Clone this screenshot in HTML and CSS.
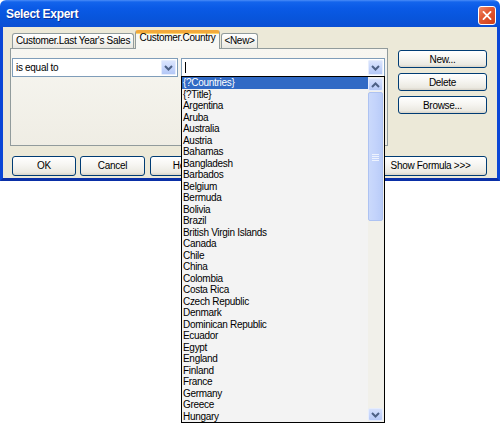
FILE: index.html
```html
<!DOCTYPE html>
<html lang="en">
<head>
    <meta charset="UTF-8">
    <title>Select Expert</title>
    <link rel="stylesheet" href="styles.css">
</head>
<body>
    <div class="window">
        <div class="titlebar">
            <span class="title">Select Expert</span>
            <button class="close-btn" aria-label="Close">
                <svg width="18" height="19" viewBox="0 0 18 19"><path d="M5 5.5 L13 13.5 M13 5.5 L5 13.5" stroke="#fff" stroke-width="2" stroke-linecap="round"/></svg>
            </button>
        </div>
        <div class="frame">
            <div class="main">
                <div class="tabs-area">
                    <ul class="tab-strip">
                        <li class="tab tab-sales">Customer.Last Year's Sales</li>
                        <li class="tab tab-country active">Customer.Country</li>
                        <li class="tab tab-new">&lt;New&gt;</li>
                    </ul>
                    <div class="panel">
                        <div class="combo-row">
                            <div class="combo combo-op">
                                <span class="combo-text">is equal to</span>
                                <span class="combo-arrow">
                                    <svg width="9" height="6" viewBox="0 0 9 6"><path d="M1 1 L4.5 4.5 L8 1" fill="none" stroke="#4d6185" stroke-width="2"/></svg>
                                </span>
                            </div>
                            <div class="combo combo-value">
                                <span class="combo-text"><span class="caret"></span></span>
                                <span class="combo-arrow">
                                    <svg width="9" height="6" viewBox="0 0 9 6"><path d="M1 1 L4.5 4.5 L8 1" fill="none" stroke="#4d6185" stroke-width="2"/></svg>
                                </span>
                                <div class="dropdown">
                                    <ul class="options">
                                        <li class="option selected">{?Countries}</li>
                                        <li class="option">{?Title}</li>
                                        <li class="option">Argentina</li>
                                        <li class="option">Aruba</li>
                                        <li class="option">Australia</li>
                                        <li class="option">Austria</li>
                                        <li class="option">Bahamas</li>
                                        <li class="option">Bangladesh</li>
                                        <li class="option">Barbados</li>
                                        <li class="option">Belgium</li>
                                        <li class="option">Bermuda</li>
                                        <li class="option">Bolivia</li>
                                        <li class="option">Brazil</li>
                                        <li class="option">British Virgin Islands</li>
                                        <li class="option">Canada</li>
                                        <li class="option">Chile</li>
                                        <li class="option">China</li>
                                        <li class="option">Colombia</li>
                                        <li class="option">Costa Rica</li>
                                        <li class="option">Czech Republic</li>
                                        <li class="option">Denmark</li>
                                        <li class="option">Dominican Republic</li>
                                        <li class="option">Ecuador</li>
                                        <li class="option">Egypt</li>
                                        <li class="option">England</li>
                                        <li class="option">Finland</li>
                                        <li class="option">France</li>
                                        <li class="option">Germany</li>
                                        <li class="option">Greece</li>
                                        <li class="option">Hungary</li>
                                    </ul>
                                    <div class="scrollbar">
                                        <span class="scroll-btn">
                                            <svg width="9" height="6" viewBox="0 0 9 6"><path d="M1 5 L4.5 1.5 L8 5" fill="none" stroke="#4d6185" stroke-width="2"/></svg>
                                        </span>
                                        <span class="scroll-thumb">
                                            <svg width="7" height="8" viewBox="0 0 7 8"><path d="M0 1.5 H7 M0 3.5 H7 M0 5.5 H7 M0 7.5 H7" stroke="#eef3fe" stroke-width="1"/></svg>
                                        </span>
                                        <span class="scroll-track"></span>
                                        <span class="scroll-btn">
                                            <svg width="9" height="6" viewBox="0 0 9 6"><path d="M1 1 L4.5 4.5 L8 1" fill="none" stroke="#4d6185" stroke-width="2"/></svg>
                                        </span>
                                    </div>
                                </div>
                            </div>
                        </div>
                    </div>
                </div>
                <div class="side-buttons">
                    <button class="btn">New...</button>
                    <button class="btn">Delete</button>
                    <button class="btn">Browse...</button>
                </div>
            </div>
            <div class="footer">
                <button class="btn btn-ok">OK</button>
                <button class="btn btn-cancel">Cancel</button>
                <button class="btn btn-help">Help</button>
                <button class="btn btn-formula">Show Formula &gt;&gt;&gt;</button>
            </div>
        </div>
    </div>
</body>
</html>
```

FILE: styles.css
```css
:root {
    --dialog-face: #ece9d8;
    --frame-blue: #0b47d6;
    --frame-bottom: #0a2fa6;
    --tab-border: #919b9c;
    --button-border: #003c74;
    --combo-border: #7f9db9;
    --arrow-face: #c3d3fb;
    --highlight: #316ac5;
}

* {
    margin: 0;
    padding: 0;
    box-sizing: border-box;
}

html,
body {
    min-height: 425px;
}

body {
    background: #ffffff;
    font-family: "Liberation Sans", Arial, sans-serif;
    font-size: 10px;
    letter-spacing: -0.3px;
    color: #000;
}

ul {
    list-style: none;
}

button {
    font: inherit;
    letter-spacing: inherit;
    color: inherit;
}

.window {
    width: 500px;
}

/* title bar */
.titlebar {
    height: 27px;
    display: flex;
    align-items: center;
    justify-content: space-between;
    padding: 0 4px 0 6px;
    border-radius: 6px 6px 0 0;
    background: linear-gradient(to bottom, #4a8cf7 0, #1364ec 2px, #0a5ae6 8px, #0856dd 60%, #0a4fd4 100%);
}

.title {
    color: #fff;
    font-weight: bold;
    font-size: 12px;
    letter-spacing: -0.3px;
    padding-top: 1px;
    text-shadow: 1px 1px 0 #0b2f9a;
}

.close-btn {
    width: 18px;
    height: 19px;
    border: 1px solid #fff;
    border-radius: 3px;
    background: linear-gradient(135deg, #f08a6a 0%, #e25b34 40%, #cf3e18 100%);
    display: flex;
    align-items: center;
    justify-content: center;
    margin-top: 3px;
}

.close-btn svg {
    display: block;
}

/* dialog body */
.frame {
    background: var(--dialog-face);
    border-left: 3px solid var(--frame-blue);
    border-right: 3px solid var(--frame-blue);
    border-bottom: 3px solid var(--frame-bottom);
    padding: 3px 10px 2px 7px;
}

.main {
    display: flex;
    gap: 10px;
    height: 116px;
}

.tabs-area {
    width: 378px;
}

.tab-strip {
    height: 18px;
    display: flex;
    align-items: flex-end;
    padding-left: 2px;
}

.tab {
    height: 15px;
    line-height: 14px;
    text-align: center;
    border: 1px solid var(--tab-border);
    border-bottom: none;
    border-radius: 3px 3px 0 0;
    background: linear-gradient(to bottom, #ffffff, #f3f3ef 60%, #e8e7e0);
    white-space: nowrap;
}

.tab-sales {
    width: 122px;
}

.tab-country {
    width: 85px;
    margin: 0 1px;
}

.tab-new {
    width: 37px;
}

.tab.active {
    height: 19px;
    margin-bottom: -1px;
    position: relative;
    line-height: 10px;
    padding-bottom: 5px;
    border-top: 3px solid #f2a93b;
    box-shadow: inset 0 1px 0 #ffd46a;
    background: #f8f8f4;
    padding-top: 0;
}

.panel {
    height: 98px;
    border: 1px solid var(--tab-border);
    background: linear-gradient(to bottom, #f7f6f1, #efede4);
    padding: 9px 2px 0 1px;
}

.combo-row {
    display: flex;
    gap: 3px;
}

.combo {
    height: 19px;
    border: 1px solid var(--combo-border);
    background: #fff;
    display: flex;
    align-items: stretch;
}

.combo-op {
    width: 166px;
}

.combo-value {
    width: 204px;
    position: relative;
}

.combo-text {
    flex: 1;
    line-height: 17px;
    padding-left: 3px;
    white-space: nowrap;
    display: flex;
    align-items: center;
}

.caret {
    width: 1px;
    height: 11px;
    background: #000;
}

.combo-arrow {
    width: 15px;
    margin: 1px;
    border: 1px solid #e6edfd;
    border-radius: 1px;
    background: linear-gradient(to bottom, #dbe5fd, var(--arrow-face) 60%, #b4c8f6);
    display: flex;
    align-items: center;
    justify-content: center;
}

.combo-arrow svg,
.scroll-btn svg {
    display: block;
}

/* dropdown list, drawn over the dialog */
.dropdown {
    position: absolute;
    top: 100%;
    left: -1px;
    width: 204px;
    height: 347px;
    border: 1px solid #000;
    background: #f3f3f3;
    display: flex;
    overflow: hidden;
    z-index: 10;
}

.options {
    flex: 1;
}

.option {
    height: 11.5px;
    line-height: 11.5px;
    padding-left: 1px;
    white-space: nowrap;
}

.option.selected {
    background: var(--highlight);
    color: #fff;
}

.scrollbar {
    width: 16px;
    display: flex;
    flex-direction: column;
    padding: 1px 1px 1px 0;
    background: #f1f0ea;
    gap: 1px;
}

.scroll-btn {
    height: 13px;
    border: 1px solid #e6edfd;
    border-radius: 2px;
    background: linear-gradient(to bottom, #d6e1fc, var(--arrow-face) 60%, #b6c9f5);
    display: flex;
    align-items: center;
    justify-content: center;
}

.scroll-thumb {
    height: 129px;
    border: 1px solid #adc2f2;
    border-radius: 2px;
    background: linear-gradient(to right, #cad9fb, #c3d3fb 50%, #b9ccf8);
    display: flex;
    align-items: center;
    justify-content: center;
}

.scroll-track {
    flex: 1;
}

/* buttons */
.side-buttons {
    width: 89px;
    display: flex;
    flex-direction: column;
    gap: 5px;
    padding-top: 20px;
}

.btn {
    height: 18px;
    line-height: 16px;
    padding-top: 1px;
    border: 1px solid var(--button-border);
    border-radius: 3px;
    background: linear-gradient(to bottom, #ffffff 0%, #f6f5f1 45%, #ebe9e1 85%, #d8d3c8 100%);
    text-align: center;
    white-space: nowrap;
}

.footer {
    display: flex;
    gap: 4px;
    margin-top: 10px;
    padding-left: 2px;
}

.footer .btn {
    height: 20px;
    line-height: 18px;
    padding-top: 0;
}

.btn-ok {
    width: 64px;
}

.btn-cancel {
    width: 65px;
}

.btn-help {
    width: 65px;
    margin-left: 1px;
}

.btn-formula {
    width: 113px;
    margin-left: auto;
}
```
